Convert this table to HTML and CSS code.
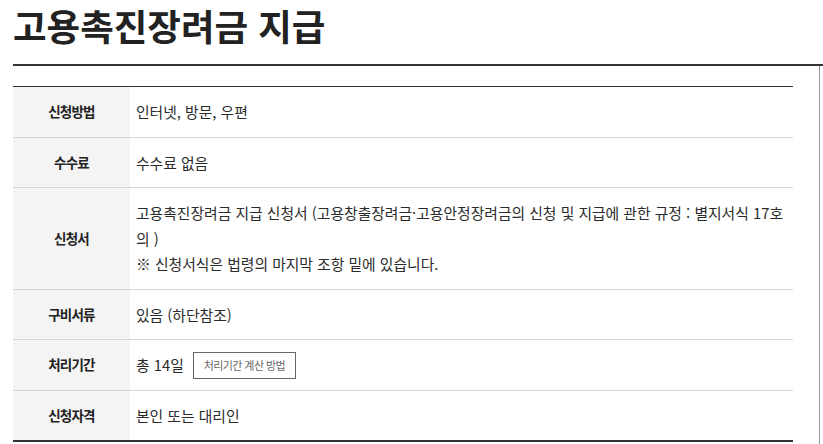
FILE: index.html
```html
<!DOCTYPE html>
<html lang="ko">
<head>
<meta charset="utf-8">
<title>고용촉진장려금 지급</title>
<link rel="stylesheet" href="styles.css">
</head>
<body>
<div class="page">
  <h1 class="title">고용촉진장려금 지급</h1>
  <div class="section">
    <div class="frame">
      <table class="info">
        <tbody>
          <tr>
            <th>신청방법</th>
            <td>인터넷, 방문, 우편</td>
          </tr>
          <tr>
            <th>수수료</th>
            <td>수수료 없음</td>
          </tr>
          <tr>
            <th>신청서</th>
            <td>고용촉진장려금 지급 신청서 (고용창출장려금·고용안정장려금의 신청 및 지급에 관한 규정 : 별지서식 17호의 )<br>※ 신청서식은 법령의 마지막 조항 밑에 있습니다.</td>
          </tr>
          <tr>
            <th>구비서류</th>
            <td>있음 (하단참조)</td>
          </tr>
          <tr>
            <th>처리기간</th>
            <td>총 14일<button class="calc" type="button">처리기간 계산 방법</button></td>
          </tr>
          <tr>
            <th>신청자격</th>
            <td>본인 또는 대리인</td>
          </tr>
        </tbody>
      </table>
    </div>
  </div>
</div>
</body>
</html>
```

FILE: styles.css
```css
html, body {
  margin: 0;
  padding: 0;
  background: #fff;
}

body {
  font-family: "Noto Sans CJK KR", "Noto Sans", sans-serif;
  color: #333;
  overflow: hidden;
}

.page {
  padding-left: 13px;
}

.title {
  margin: 0 0 21px 0;
  padding-top: 9px;
  font-size: 36.5px;
  line-height: 34px;
  font-weight: 700;
  color: #222;
  letter-spacing: 0;
}

.section {
  border-top: 2px solid #333;
}

.frame {
  height: 400px;
  border-right: 1px solid #9a9a9a;
  padding-top: 20px;
  box-sizing: border-box;
  width: 807px;
}

.info {
  width: 780px;
  border-collapse: collapse;
  border-top: 1px solid #333;
  border-bottom: 2px solid #333;
}

.info th,
.info td {
  border-bottom: 1px solid #d6d6d6;
  padding: 12px 4px 12px 6px;
  line-height: 25.5px;
  vertical-align: middle;
}

.info tr:last-child th,
.info tr:last-child td {
  border-bottom: 2px solid #333;
}

.info th {
  width: 117px;
  box-sizing: border-box;
  padding-left: 0;
  padding-right: 0;
  background: #f4f4f4;
  font-size: 13.5px;
  font-weight: 700;
  letter-spacing: -0.8px;
  color: #222;
  text-align: center;
}

.info td {
  font-size: 14.8px;
  color: #2b2b2b;
  text-align: left;
}

.calc {
  display: inline-block;
  vertical-align: middle;
  margin: -4px 0 -2px 9px;
  height: 27px;
  padding: 0 10px 2px;
  border: 1px solid #666;
  background: #fff;
  font-family: "Noto Sans CJK KR", "Noto Sans", sans-serif;
  font-size: 11px;
  letter-spacing: -0.6px;
  color: #666;
  line-height: 22px;
  cursor: pointer;
}
```
